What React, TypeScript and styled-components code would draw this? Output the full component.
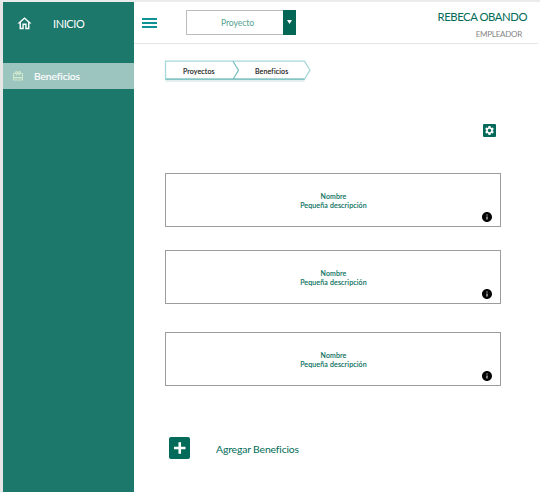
import React from "react";
import styled, { createGlobalStyle } from "styled-components";
import { MdCardGiftcard, MdInfo, MdOutlineHome, MdSettings } from "react-icons/md";

const GlobalStyle = createGlobalStyle`
  *, *::before, *::after { box-sizing: border-box; }
  body {
    margin: 0;
    background: #fff;
    font-family: Lato, "Liberation Sans", sans-serif;
    font-variant-ligatures: none;
  }
`;

const Frame = styled.div`
  display: flex;
  width: 540px;
  height: 492px;
  overflow: hidden;
  border-top: 2px solid #ebebeb;
  border-left: 3px solid #e6e6e6;
  background: #fff;
`;

const Sidebar = styled.aside`
  flex: 0 0 131px;
  background: #1b786b;
  color: #fff;
`;

const HomeLink = styled.div`
  display: flex;
  align-items: center;
  height: 43px;
  padding-left: 13px;
  gap: 20px;
  font-size: 11px;
  letter-spacing: -0.4px;
  svg { width: 17px; height: 17px; }
`;

const NavItem = styled.div`
  display: flex;
  align-items: center;
  height: 26px;
  margin-top: 18px;
  padding-left: 9px;
  gap: 10px;
  background: #9cc5bf;
  font-size: 10.3px;
  letter-spacing: -0.1px;
  -webkit-text-stroke: 0.15px #fff;
  svg { width: 12px; height: 12px; color: #d0e8cc; }
`;

const Main = styled.main`
  flex: 1;
  display: flex;
  flex-direction: column;
`;

const TopBar = styled.header`
  display: flex;
  height: 42px;
  margin-right: 2px;
  padding: 8px 11px 0 8px;
  border-bottom: 1px solid #e6e6e6;
`;

const MenuButton = styled.div`
  display: flex;
  flex-direction: column;
  justify-content: space-between;
  width: 15px;
  height: 10px;
  margin: 8px 29px 0 0;
`;

const MenuLine = styled.span`
  height: 2px;
  background: #109294;
`;

const Select = styled.div`
  display: flex;
  width: 110px;
  height: 25px;
  border: 1px solid #bcbcbc;
`;

const SelectLabel = styled.span`
  flex: 1;
  display: flex;
  align-items: center;
  justify-content: center;
  padding: 1px 0 0 5px;
  color: #55a292;
  font-size: 8.6px;
  letter-spacing: -0.05px;
`;

const SelectArrow = styled.span`
  display: flex;
  align-items: center;
  justify-content: center;
  width: 13px;
  margin: -1px -1px -1px 0;
  padding-bottom: 1px;
  background: #046655;
`;

const User = styled.div`
  margin-left: auto;
  text-align: right;
  white-space: nowrap;
`;

const UserName = styled.div`
  margin-top: -1px;
  color: #006b57;
  font-size: 11.3px;
  line-height: 15px;
  letter-spacing: -0.44px;
`;

const UserRole = styled.div`
  margin: 4px 5px 0 0;
  color: #858585;
  font-size: 8px;
  line-height: 12px;
  letter-spacing: -0.25px;
`;

const Content = styled.div`
  display: flex;
  flex-direction: column;
  padding: 15px 39px 0 29px;
`;

const Breadcrumb = styled.nav`
  display: grid;
  width: 150px;
  height: 26px;
  > * { grid-area: 1 / 1; }
`;

const CrumbLabels = styled.div`
  display: flex;
  align-items: center;
  height: 22px;
  padding-top: 1px;
  color: #111;
  font-size: 7px;
  letter-spacing: 0.15px;
  -webkit-text-stroke: 0.12px #111;
`;

const Crumb = styled.span<{ $width: number; $indent: number }>`
  width: ${(p) => p.$width}px;
  padding-left: ${(p) => p.$indent}px;
`;

const SettingsButton = styled.div`
  display: flex;
  align-items: center;
  justify-content: center;
  align-self: flex-end;
  width: 13px;
  height: 13px;
  margin: 39px 5px 36px 0;
  border-radius: 1px;
  background: #046b5b;
  color: #fff;
  svg { width: 11px; height: 11px; }
`;

const Card = styled.article<{ $gap: number }>`
  display: grid;
  width: 336px;
  height: 54px;
  margin: 0 0 ${(p) => p.$gap}px 2px;
  border: 1px solid #9c9c9c;
  > * { grid-area: 1 / 1; }
`;

const CardText = styled.div`
  padding: 18px 0 0 1px;
  text-align: center;
  color: #006b57;
  font-size: 7px;
  line-height: 9px;
  letter-spacing: 0.17px;
  -webkit-text-stroke: 0.12px #006b57;
`;

const InfoIcon = styled(MdInfo)`
  align-self: end;
  justify-self: end;
  width: 12px;
  height: 12px;
  margin: 0 7px 3px 0;
  color: #050505;
`;

const AddRow = styled.div`
  display: flex;
  align-items: center;
  height: 22px;
  margin-left: 6px;
  gap: 26px;
  color: #006b57;
  font-size: 10.4px;
  letter-spacing: -0.15px;
`;

const AddLabel = styled.span`
  padding-top: 1px;
`;

const benefits = [
  { name: "Nombre", description: "Pequeña descripción", gap: 23 },
  { name: "Nombre", description: "Pequeña descripción", gap: 28 },
  { name: "Nombre", description: "Pequeña descripción", gap: 51 },
];

export default function App() {
  return (
    <>
      <GlobalStyle />
      <Frame>
        <Sidebar>
          <HomeLink>
            <MdOutlineHome />
            <span>INICIO</span>
          </HomeLink>
          <NavItem>
            <MdCardGiftcard />
            <span>Beneficios</span>
          </NavItem>
        </Sidebar>
        <Main>
          <TopBar>
            <MenuButton>
              <MenuLine />
              <MenuLine />
              <MenuLine />
            </MenuButton>
            <Select>
              <SelectLabel>Proyecto</SelectLabel>
              <SelectArrow>
                <svg width="5" height="4" viewBox="0 0 5 4">
                  <path d="M0 0h5L2.5 4z" fill="#fff" />
                </svg>
              </SelectArrow>
            </Select>
            <User>
              <UserName>REBECA OBANDO</UserName>
              <UserRole>EMPLEADOR</UserRole>
            </User>
          </TopBar>
          <Content>
            <Breadcrumb>
              <svg width="150" height="26" viewBox="0 0 150 26" fill="none">
                <path d="M2.5 22h139" stroke="#e3efef" strokeWidth="2" />
                <path
                  d="M2.5 2.2h139l5.5 9-5.5 9H2.5z"
                  stroke="#a9d8d8"
                  strokeWidth="1.3"
                />
                <path d="M2.5 20.2H141.5M70 2.2l5.5 9-5.5 9" stroke="#73bdbc" strokeWidth="1.2" />
              </svg>
              <CrumbLabels>
                <Crumb $width={72} $indent={20}>Proyectos</Crumb>
                <Crumb $width={70} $indent={20}>Beneficios</Crumb>
              </CrumbLabels>
            </Breadcrumb>
            <SettingsButton>
              <MdSettings />
            </SettingsButton>
            {benefits.map((benefit, index) => (
              <Card key={index} $gap={benefit.gap}>
                <CardText>
                  <div>{benefit.name}</div>
                  <div>{benefit.description}</div>
                </CardText>
                <InfoIcon />
              </Card>
            ))}
            <AddRow>
              <svg width="21" height="22" viewBox="0 0 21 22">
                <rect width="21" height="22" rx="2" fill="#046b5b" />
                <path d="M5 11h11.5M10.75 5.2v11.6" stroke="#fff" strokeWidth="2.6" />
              </svg>
              <AddLabel>Agregar Beneficios</AddLabel>
            </AddRow>
          </Content>
        </Main>
      </Frame>
    </>
  );
}
